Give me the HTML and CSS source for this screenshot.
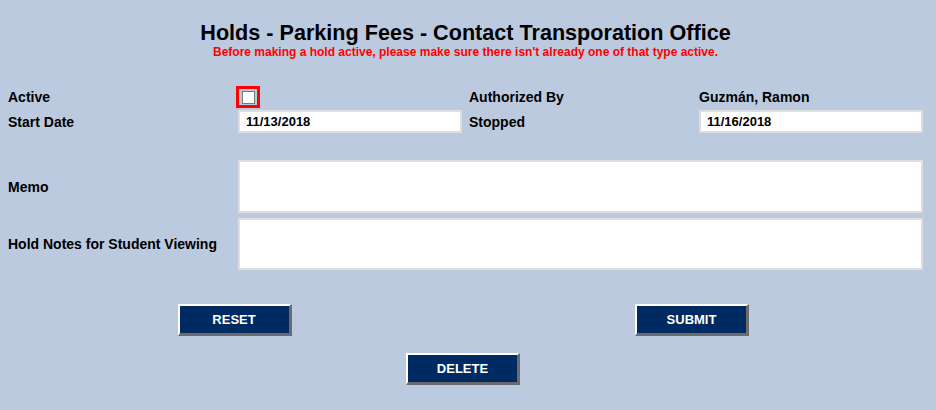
FILE: index.html
```html
<!DOCTYPE html>
<html>
<head>
<meta charset="utf-8">
<link rel="stylesheet" href="styles.css">
</head>
<body>
<div class="page">
  <h1 class="title">Holds - Parking Fees - Contact Transporation Office</h1>
  <p class="warning">Before making a hold active, please make sure there isn't already one of that type active.</p>

  <div class="form-grid">
    <div class="label">Active</div>
    <div class="cell"><span class="chk-wrap"><input type="checkbox" class="chk"></span></div>
    <div class="label">Authorized By</div>
    <div class="label">Guzmán, Ramon</div>

    <div class="label">Start Date</div>
    <div class="cell"><input type="text" class="field" value="11/13/2018"></div>
    <div class="label">Stopped</div>
    <div class="cell"><input type="text" class="field" value="11/16/2018"></div>
  </div>

  <div class="notes-grid">
    <div class="label">Memo</div>
    <textarea class="area"></textarea>
    <div class="label">Hold Notes for Student Viewing</div>
    <textarea class="area"></textarea>
  </div>

  <div class="buttons">
    <button class="btn">RESET</button>
    <button class="btn">SUBMIT</button>
    <button class="btn btn-center">DELETE</button>
  </div>
</div>
</body>
</html>
```

FILE: styles.css
```css
html, body {
  margin: 0;
  padding: 0;
}
body {
  background: #bccadf;
  font-family: "Liberation Sans", Arial, sans-serif;
  color: #000;
}
.page {
  padding: 0 13px 0 8px;
}
.title {
  margin: 21px 0 0;
  font-size: 21.6px;
  line-height: 24px;
  font-weight: bold;
  text-align: center;
}
.warning {
  margin: 0;
  font-size: 12px;
  line-height: 14px;
  font-weight: bold;
  color: #ff0000;
  text-align: center;
}
.form-grid {
  margin-top: 26px;
  display: grid;
  grid-template-columns: 230px 231px 230px 224px;
  grid-template-rows: 24px 25px;
  align-items: center;
}
.label {
  font-size: 14px;
  font-weight: bold;
  line-height: 16px;
}
.cell {
  display: flex;
  align-items: center;
}
.chk-wrap {
  display: inline-flex;
  margin-left: -2px;
  border: 3px solid #ff0000;
  padding: 2px 2px 1px 3px;
}
.chk {
  appearance: none;
  -webkit-appearance: none;
  margin: 0;
  width: 13px;
  height: 13px;
  background: #fff;
  border: 1px solid #767676;
  box-sizing: border-box;
}
.field {
  box-sizing: border-box;
  width: 224px;
  height: 23px;
  margin: 0;
  border: 2px solid #dedede;
  background: #fff;
  padding: 0 0 0 6px;
  font-family: "Liberation Sans", Arial, sans-serif;
  font-size: 13px;
  font-weight: bold;
  color: #000;
  outline: none;
}
.notes-grid {
  margin-top: 26px;
  display: grid;
  grid-template-columns: 230px 685px;
  grid-template-rows: 53px 52px;
  row-gap: 5px;
  align-items: center;
}
.area {
  box-sizing: border-box;
  width: 685px;
  height: 100%;
  margin: 0;
  border: 2px solid #dedede;
  background: #fff;
  resize: none;
  outline: none;
}
.buttons {
  margin-top: 34px;
  display: grid;
  grid-template-columns: 453px 462px;
  row-gap: 17px;
}
.btn {
  justify-self: center;
  box-sizing: border-box;
  width: 114px;
  height: 32px;
  margin: 0;
  padding: 0;
  background: #002a62;
  color: #fff;
  font-family: "Liberation Sans", Arial, sans-serif;
  font-size: 13px;
  font-weight: bold;
  border-style: solid;
  border-width: 2px 3px 3px 2px;
  border-color: #fff #6b6b6b #6b6b6b #fff;
}
.btn-center {
  grid-column: 1 / span 2;
  margin-right: 5px;
}
```
